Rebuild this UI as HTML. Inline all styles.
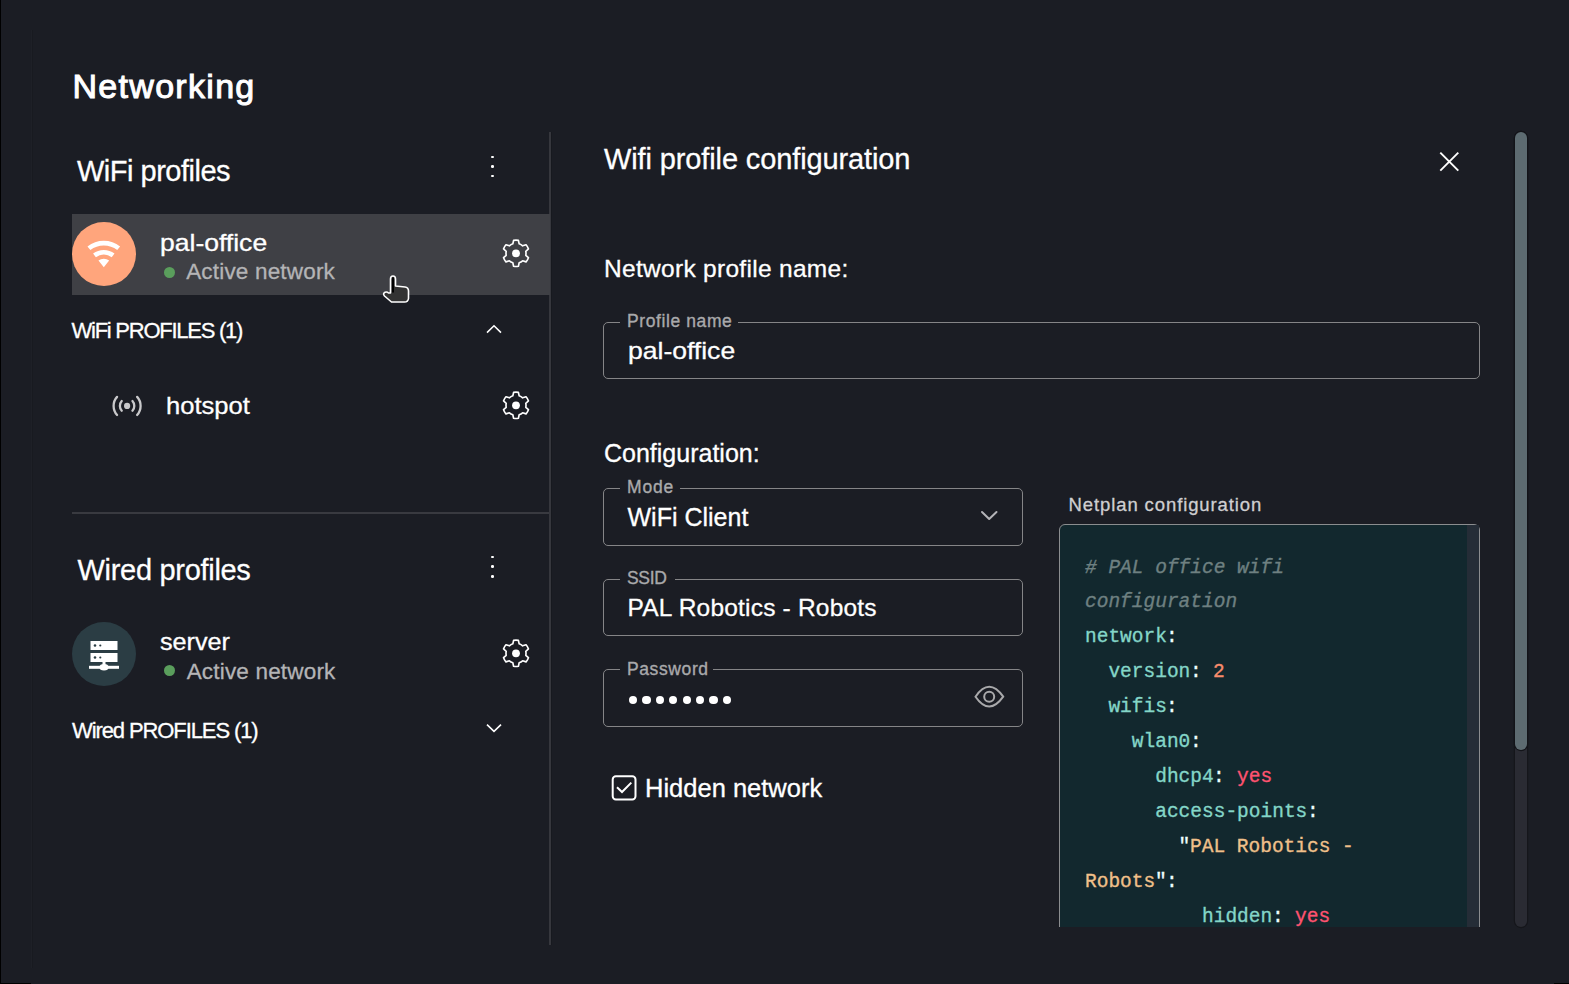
<!DOCTYPE html>
<html><head><meta charset="utf-8"><style>
html,body{margin:0;padding:0}
body{width:1569px;height:984px;overflow:hidden;position:relative;background:#1b1d24;font-family:'Liberation Sans', sans-serif}
.t{position:absolute;white-space:pre;line-height:1}
</style></head><body>
<div style="position:absolute;left:0px;top:0px;width:1px;height:984px;background:#000"></div>
<div style="position:absolute;left:31px;top:30px;width:1px;height:938px;background:#1e2027"></div>
<div style="position:absolute;left:32px;top:30px;width:1px;height:938px;background:#181a20"></div>
<div style="position:absolute;left:0px;top:983px;width:31px;height:1px;background:#000"></div>
<div style="position:absolute;left:1554px;top:983px;width:15px;height:1px;background:#000"></div>
<div class="t" style="left:72.5px;top:69.10px;font-size:34px;color:#fff;letter-spacing:1.3px;font-weight:normal;font-family:'Liberation Sans', sans-serif;-webkit-text-stroke:1.0px #fff;">Networking</div>
<div style="position:absolute;left:549px;top:132px;width:2px;height:813px;background:#36373d"></div>
<div style="position:absolute;left:551px;top:132px;width:1px;height:813px;background:#17191f"></div>
<div class="t" style="left:77px;top:156.75px;font-size:29px;color:#fff;letter-spacing:-0.5px;font-weight:normal;font-family:'Liberation Sans', sans-serif;-webkit-text-stroke:0.3px #fff;">WiFi profiles</div>
<div style="position:absolute;left:491.2px;top:155.5px;width:2.6px;height:2.6px;background:#fff;border-radius:50%"></div>
<div style="position:absolute;left:491.2px;top:165.0px;width:2.6px;height:2.6px;background:#fff;border-radius:50%"></div>
<div style="position:absolute;left:491.2px;top:174.6px;width:2.6px;height:2.6px;background:#fff;border-radius:50%"></div>
<div style="position:absolute;left:491.2px;top:555.5px;width:2.6px;height:2.6px;background:#fff;border-radius:50%"></div>
<div style="position:absolute;left:491.2px;top:565.3000000000001px;width:2.6px;height:2.6px;background:#fff;border-radius:50%"></div>
<div style="position:absolute;left:491.2px;top:575.1px;width:2.6px;height:2.6px;background:#fff;border-radius:50%"></div>
<div style="position:absolute;left:72px;top:213.5px;width:478px;height:81.5px;background:#3f4045"></div>
<div style="position:absolute;left:72px;top:222px;width:64px;height:64px;background:#ffa57c;border-radius:50%"></div>
<svg style="position:absolute;left:0;top:0" width="1569" height="984"><path d="M103.8,267.3 L98.45,260.57 A8.6,8.6 0 0 1 109.15,260.57 Z M93.09,253.59 A17.4,17.4 0 0 1 114.51,253.59 L111.68,257.21 A12.8,12.8 0 0 0 95.92,257.21 Z M87.48,246.42 A26.5,26.5 0 0 1 120.12,246.42 L117.22,250.12 A21.8,21.8 0 0 0 90.38,250.12 Z" fill="#fff"/></svg>
<div class="t" style="left:160px;top:230.70px;font-size:24px;color:#fff;letter-spacing:0px;font-weight:normal;font-family:'Liberation Sans', sans-serif;transform:scaleX(1.105);transform-origin:0 0;-webkit-text-stroke:0.3px #fff;">pal-office</div>
<div style="position:absolute;left:163.5px;top:266.5px;width:11px;height:11px;background:#5a9e5c;border-radius:50%"></div>
<div class="t" style="left:186.2px;top:260.77px;font-size:22.5px;color:#b4b4b6;letter-spacing:0.18px;font-weight:normal;font-family:'Liberation Sans', sans-serif;-webkit-text-stroke:0.3px #b4b4b6;">Active network</div>
<svg style="position:absolute;left:0;top:0" width="1569" height="984"><path d="M512.83,243.82 L513.59,240.32 A13.2,13.2 0 0 1 518.41,240.32 L519.17,243.82 A10.0,10.0 0 0 1 522.63,245.81 L526.04,244.73 A13.2,13.2 0 0 1 528.44,248.89 L525.80,251.31 A10.0,10.0 0 0 1 525.80,255.29 L528.44,257.71 A13.2,13.2 0 0 1 526.04,261.87 L522.63,260.79 A10.0,10.0 0 0 1 519.17,262.78 L518.41,266.28 A13.2,13.2 0 0 1 513.59,266.28 L512.83,262.78 A10.0,10.0 0 0 1 509.37,260.79 L505.96,261.87 A13.2,13.2 0 0 1 503.56,257.71 L506.20,255.29 A10.0,10.0 0 0 1 506.20,251.31 L503.56,248.89 A13.2,13.2 0 0 1 505.96,244.73 L509.37,245.81 A10.0,10.0 0 0 1 512.83,243.82 Z" fill="none" stroke="#fff" stroke-width="1.65" stroke-linejoin="round"/><circle cx="516" cy="253.3" r="3.9" fill="#fff"/><path d="M512.83,395.82 L513.59,392.32 A13.2,13.2 0 0 1 518.41,392.32 L519.17,395.82 A10.0,10.0 0 0 1 522.63,397.81 L526.04,396.73 A13.2,13.2 0 0 1 528.44,400.89 L525.80,403.31 A10.0,10.0 0 0 1 525.80,407.29 L528.44,409.71 A13.2,13.2 0 0 1 526.04,413.87 L522.63,412.79 A10.0,10.0 0 0 1 519.17,414.78 L518.41,418.28 A13.2,13.2 0 0 1 513.59,418.28 L512.83,414.78 A10.0,10.0 0 0 1 509.37,412.79 L505.96,413.87 A13.2,13.2 0 0 1 503.56,409.71 L506.20,407.29 A10.0,10.0 0 0 1 506.20,403.31 L503.56,400.89 A13.2,13.2 0 0 1 505.96,396.73 L509.37,397.81 A10.0,10.0 0 0 1 512.83,395.82 Z" fill="none" stroke="#fff" stroke-width="1.65" stroke-linejoin="round"/><circle cx="516" cy="405.3" r="3.9" fill="#fff"/><path d="M512.83,643.82 L513.59,640.32 A13.2,13.2 0 0 1 518.41,640.32 L519.17,643.82 A10.0,10.0 0 0 1 522.63,645.81 L526.04,644.73 A13.2,13.2 0 0 1 528.44,648.89 L525.80,651.31 A10.0,10.0 0 0 1 525.80,655.29 L528.44,657.71 A13.2,13.2 0 0 1 526.04,661.87 L522.63,660.79 A10.0,10.0 0 0 1 519.17,662.78 L518.41,666.28 A13.2,13.2 0 0 1 513.59,666.28 L512.83,662.78 A10.0,10.0 0 0 1 509.37,660.79 L505.96,661.87 A13.2,13.2 0 0 1 503.56,657.71 L506.20,655.29 A10.0,10.0 0 0 1 506.20,651.31 L503.56,648.89 A13.2,13.2 0 0 1 505.96,644.73 L509.37,645.81 A10.0,10.0 0 0 1 512.83,643.82 Z" fill="none" stroke="#fff" stroke-width="1.65" stroke-linejoin="round"/><circle cx="516" cy="653.3" r="3.9" fill="#fff"/></svg>
<div class="t" style="left:71.5px;top:320.10px;font-size:22px;color:#fff;letter-spacing:-1.25px;font-weight:normal;font-family:'Liberation Sans', sans-serif;-webkit-text-stroke:0.3px #fff;">WiFi PROFILES (1)</div>
<svg style="position:absolute;left:0;top:0" width="1569" height="984"><path d="M487,332.6 L494,325.8 L501,332.6" fill="none" stroke="#fff" stroke-width="1.6"/><path d="M487,724.6 L494,731.4 L501,724.6" fill="none" stroke="#fff" stroke-width="1.6"/></svg>
<svg style="position:absolute;left:0;top:0" width="1569" height="984" fill="none" stroke="#c9c9cb" stroke-width="2.3" stroke-linecap="round"><circle cx="127.1" cy="405.9" r="3.1" fill="#c9c9cb" stroke="none"/><path d="M121.75,401.08 A7.2,7.2 0 0 0 121.75,410.72"/><path d="M132.45,401.08 A7.2,7.2 0 0 1 132.45,410.72"/><path d="M117.07,396.87 A13.5,13.5 0 0 0 117.07,414.93"/><path d="M137.13,396.87 A13.5,13.5 0 0 1 137.13,414.93"/></svg>
<div class="t" style="left:165.5px;top:394.30px;font-size:24px;color:#fff;letter-spacing:0px;font-weight:normal;font-family:'Liberation Sans', sans-serif;transform:scaleX(1.065);transform-origin:0 0;-webkit-text-stroke:0.3px #fff;">hotspot</div>
<div style="position:absolute;left:72px;top:512.4px;width:477px;height:2px;background:#393a40"></div>
<div class="t" style="left:77.5px;top:556.35px;font-size:29px;color:#fff;letter-spacing:-0.3px;font-weight:normal;font-family:'Liberation Sans', sans-serif;-webkit-text-stroke:0.3px #fff;">Wired profiles</div>
<div style="position:absolute;left:72px;top:622px;width:64px;height:64px;background:#2b3d44;border-radius:50%"></div>
<svg style="position:absolute;left:0;top:0" width="1569" height="984"><rect x="90.5" y="641" width="27" height="9" fill="#fff"/><rect x="90.5" y="653" width="27" height="9" fill="#fff"/><circle cx="95" cy="645.5" r="1.3" fill="#2b3d44"/><circle cx="100.3" cy="645.5" r="1.1" fill="#2b3d44"/><circle cx="95" cy="657.5" r="1.3" fill="#2b3d44"/><circle cx="100.3" cy="657.5" r="1.1" fill="#2b3d44"/><rect x="102.5" y="662" width="3" height="4" fill="#fff"/><rect x="89" y="665.8" width="30" height="3" fill="#fff"/><ellipse cx="104" cy="667.3" rx="4.5" ry="3.2" fill="#fff"/></svg>
<div class="t" style="left:160.4px;top:630.30px;font-size:24px;color:#fff;letter-spacing:0px;font-weight:normal;font-family:'Liberation Sans', sans-serif;transform:scaleX(1.05);transform-origin:0 0;-webkit-text-stroke:0.3px #fff;">server</div>
<div style="position:absolute;left:163.5px;top:665px;width:11px;height:11px;background:#5a9e5c;border-radius:50%"></div>
<div class="t" style="left:186.7px;top:660.77px;font-size:22.5px;color:#b4b4b6;letter-spacing:0.18px;font-weight:normal;font-family:'Liberation Sans', sans-serif;-webkit-text-stroke:0.3px #b4b4b6;">Active network</div>
<div class="t" style="left:72px;top:719.60px;font-size:22px;color:#fff;letter-spacing:-1.1px;font-weight:normal;font-family:'Liberation Sans', sans-serif;-webkit-text-stroke:0.3px #fff;">Wired PROFILES (1)</div>
<svg style="position:absolute;left:0;top:0" width="1569" height="984"><path d="M390.5,293 L390.5,279 Q390.5,276 393,276 Q395.5,276 395.5,279 L395.5,286 L405,287 Q408.5,287.5 408.5,291 L408.5,298.5 Q408,302 404.5,302 L391.5,302 L384.5,296 Q382.5,293.5 385,292.3 Q387,291.5 388.5,293 Z" fill="#333" stroke="#fff" stroke-width="1.6" stroke-linejoin="round"/><rect x="392" y="277.5" width="2" height="15" fill="#000"/></svg>
<div class="t" style="left:604px;top:144.95px;font-size:29px;color:#fff;letter-spacing:-0.12px;font-weight:normal;font-family:'Liberation Sans', sans-serif;-webkit-text-stroke:0.3px #fff;">Wifi profile configuration</div>
<svg style="position:absolute;left:0;top:0" width="1569" height="984"><path d="M1440.3,152.6 L1458.3,170.6 M1458.3,152.6 L1440.3,170.6" stroke="#fff" stroke-width="1.9"/></svg>
<div class="t" style="left:604px;top:256.78px;font-size:24.5px;color:#fff;letter-spacing:0.3px;font-weight:normal;font-family:'Liberation Sans', sans-serif;-webkit-text-stroke:0.3px #fff;">Network profile name:</div>
<div style="position:absolute;left:603.3px;top:321.6px;width:877px;height:57.5px;box-sizing:border-box;border:1.5px solid #858587;border-radius:5px"></div>
<div style="position:absolute;left:619.8px;top:318.6px;width:118px;height:6px;background:#1b1d24"></div>
<div class="t" style="left:627px;top:312.73px;font-size:17.5px;color:#a9a9ab;letter-spacing:0.6px;font-weight:normal;font-family:'Liberation Sans', sans-serif;-webkit-text-stroke:0.35px #a9a9ab;">Profile name</div>
<div class="t" style="left:627.5px;top:338.60px;font-size:24px;color:#fff;letter-spacing:0px;font-weight:normal;font-family:'Liberation Sans', sans-serif;transform:scaleX(1.105);transform-origin:0 0;-webkit-text-stroke:0.3px #fff;">pal-office</div>
<div class="t" style="left:604px;top:441.25px;font-size:25px;color:#fff;letter-spacing:0px;font-weight:normal;font-family:'Liberation Sans', sans-serif;-webkit-text-stroke:0.3px #fff;">Configuration:</div>
<div style="position:absolute;left:603.3px;top:488px;width:420px;height:57.5px;box-sizing:border-box;border:1.5px solid #858587;border-radius:5px"></div>
<div style="position:absolute;left:619.8px;top:485px;width:60px;height:6px;background:#1b1d24"></div>
<div class="t" style="left:627px;top:479.43px;font-size:17.5px;color:#a9a9ab;letter-spacing:0.8px;font-weight:normal;font-family:'Liberation Sans', sans-serif;-webkit-text-stroke:0.35px #a9a9ab;">Mode</div>
<div class="t" style="left:627.5px;top:504.95px;font-size:25px;color:#fff;letter-spacing:0px;font-weight:normal;font-family:'Liberation Sans', sans-serif;-webkit-text-stroke:0.3px #fff;">WiFi Client</div>
<svg style="position:absolute;left:0;top:0" width="1569" height="984"><path d="M982,512 L989.2,519 L996.5,512" fill="none" stroke="#b4b4b8" stroke-width="2" stroke-linecap="round" stroke-linejoin="round"/></svg>
<div style="position:absolute;left:603.3px;top:578.8px;width:420px;height:57.5px;box-sizing:border-box;border:1.5px solid #858587;border-radius:5px"></div>
<div style="position:absolute;left:619.8px;top:575.8px;width:55px;height:6px;background:#1b1d24"></div>
<div class="t" style="left:627px;top:570.33px;font-size:17.5px;color:#a9a9ab;letter-spacing:-0.3px;font-weight:normal;font-family:'Liberation Sans', sans-serif;-webkit-text-stroke:0.35px #a9a9ab;">SSID</div>
<div class="t" style="left:627.5px;top:595.67px;font-size:24.5px;color:#fff;letter-spacing:0.2px;font-weight:normal;font-family:'Liberation Sans', sans-serif;-webkit-text-stroke:0.3px #fff;">PAL Robotics - Robots</div>
<div style="position:absolute;left:603.3px;top:669px;width:420px;height:57.5px;box-sizing:border-box;border:1.5px solid #858587;border-radius:5px"></div>
<div style="position:absolute;left:619.8px;top:666px;width:93px;height:6px;background:#1b1d24"></div>
<div class="t" style="left:627px;top:661.33px;font-size:17.5px;color:#a9a9ab;letter-spacing:0.6px;font-weight:normal;font-family:'Liberation Sans', sans-serif;-webkit-text-stroke:0.35px #a9a9ab;">Password</div>
<div style="position:absolute;left:629.0px;top:696px;width:8.2px;height:8.2px;background:#fff;border-radius:50%"></div>
<div style="position:absolute;left:642.4px;top:696px;width:8.2px;height:8.2px;background:#fff;border-radius:50%"></div>
<div style="position:absolute;left:655.8px;top:696px;width:8.2px;height:8.2px;background:#fff;border-radius:50%"></div>
<div style="position:absolute;left:669.2px;top:696px;width:8.2px;height:8.2px;background:#fff;border-radius:50%"></div>
<div style="position:absolute;left:682.6px;top:696px;width:8.2px;height:8.2px;background:#fff;border-radius:50%"></div>
<div style="position:absolute;left:696.0px;top:696px;width:8.2px;height:8.2px;background:#fff;border-radius:50%"></div>
<div style="position:absolute;left:709.4px;top:696px;width:8.2px;height:8.2px;background:#fff;border-radius:50%"></div>
<div style="position:absolute;left:722.8px;top:696px;width:8.2px;height:8.2px;background:#fff;border-radius:50%"></div>
<svg style="position:absolute;left:0;top:0" width="1569" height="984" fill="none" stroke="#a9a9ab" stroke-width="2"><path d="M975.5,696.7 Q989.2,677 1003.2,696.7 Q989.2,716.4 975.5,696.7 Z"/><circle cx="989.2" cy="696.7" r="5"/></svg>
<svg style="position:absolute;left:0;top:0" width="1569" height="984" fill="none" stroke="#fff" stroke-width="2"><rect x="612.7" y="776.3" width="22.8" height="23.2" rx="3.2"/><path d="M617,787.3 L622,792 L631.3,782.6"/></svg>
<div class="t" style="left:645px;top:775.73px;font-size:25.5px;color:#fff;letter-spacing:0px;font-weight:normal;font-family:'Liberation Sans', sans-serif;-webkit-text-stroke:0.3px #fff;">Hidden network</div>
<div class="t" style="left:1068.5px;top:496.07px;font-size:18.5px;color:#cfcfd1;letter-spacing:0.9px;font-weight:normal;font-family:'Liberation Sans', sans-serif;-webkit-text-stroke:0.3px #cfcfd1;">Netplan configuration</div>
<div style="position:absolute;left:0;top:0;width:1569px;height:927px;overflow:hidden">
<div style="position:absolute;left:1058.5px;top:523.5px;width:421.5px;height:500px;box-sizing:border-box;border:1.6px solid #8b8d8f;border-radius:6px;background:#12282e"></div>
<div style="position:absolute;left:1467px;top:525px;width:11.5px;height:402px;background:#252d37"></div>
<div class="t" style="left:1084.5px;top:557.69px;font-size:20.5px;color:#6e8081;letter-spacing:0px;font-weight:normal;font-family:'Liberation Mono', monospace;font-style:italic;transform:scaleX(0.951);transform-origin:0 0;-webkit-text-stroke:0.35px #6e8081;"># PAL office wifi</div>
<div class="t" style="left:1084.5px;top:592.49px;font-size:20.5px;color:#6e8081;letter-spacing:0px;font-weight:normal;font-family:'Liberation Mono', monospace;font-style:italic;transform:scaleX(0.951);transform-origin:0 0;-webkit-text-stroke:0.35px #6e8081;">configuration</div>
<div class="t" style="left:1084.5px;top:627.49px;font-size:20.5px;color:#84d6c8;letter-spacing:0px;font-weight:normal;font-family:'Liberation Mono', monospace;transform:scaleX(0.951);transform-origin:0 0;-webkit-text-stroke:0.35px #84d6c8;">network</div>
<div class="t" style="left:1166.4px;top:627.49px;font-size:20.5px;color:#eeffff;letter-spacing:0px;font-weight:normal;font-family:'Liberation Mono', monospace;transform:scaleX(0.951);transform-origin:0 0;-webkit-text-stroke:0.35px #eeffff;">:</div>
<div class="t" style="left:1084.5px;top:662.49px;font-size:20.5px;color:#84d6c8;letter-spacing:0px;font-weight:normal;font-family:'Liberation Mono', monospace;transform:scaleX(0.951);transform-origin:0 0;-webkit-text-stroke:0.35px #84d6c8;">  version</div>
<div class="t" style="left:1189.8px;top:662.49px;font-size:20.5px;color:#eeffff;letter-spacing:0px;font-weight:normal;font-family:'Liberation Mono', monospace;transform:scaleX(0.951);transform-origin:0 0;-webkit-text-stroke:0.35px #eeffff;">: </div>
<div class="t" style="left:1213.2px;top:662.49px;font-size:20.5px;color:#f78c6c;letter-spacing:0px;font-weight:normal;font-family:'Liberation Mono', monospace;transform:scaleX(0.951);transform-origin:0 0;-webkit-text-stroke:0.35px #f78c6c;">2</div>
<div class="t" style="left:1084.5px;top:697.49px;font-size:20.5px;color:#84d6c8;letter-spacing:0px;font-weight:normal;font-family:'Liberation Mono', monospace;transform:scaleX(0.951);transform-origin:0 0;-webkit-text-stroke:0.35px #84d6c8;">  wifis</div>
<div class="t" style="left:1166.4px;top:697.49px;font-size:20.5px;color:#eeffff;letter-spacing:0px;font-weight:normal;font-family:'Liberation Mono', monospace;transform:scaleX(0.951);transform-origin:0 0;-webkit-text-stroke:0.35px #eeffff;">:</div>
<div class="t" style="left:1084.5px;top:732.49px;font-size:20.5px;color:#84d6c8;letter-spacing:0px;font-weight:normal;font-family:'Liberation Mono', monospace;transform:scaleX(0.951);transform-origin:0 0;-webkit-text-stroke:0.35px #84d6c8;">    wlan0</div>
<div class="t" style="left:1189.8px;top:732.49px;font-size:20.5px;color:#eeffff;letter-spacing:0px;font-weight:normal;font-family:'Liberation Mono', monospace;transform:scaleX(0.951);transform-origin:0 0;-webkit-text-stroke:0.35px #eeffff;">:</div>
<div class="t" style="left:1084.5px;top:767.49px;font-size:20.5px;color:#84d6c8;letter-spacing:0px;font-weight:normal;font-family:'Liberation Mono', monospace;transform:scaleX(0.951);transform-origin:0 0;-webkit-text-stroke:0.35px #84d6c8;">      dhcp4</div>
<div class="t" style="left:1213.2px;top:767.49px;font-size:20.5px;color:#eeffff;letter-spacing:0px;font-weight:normal;font-family:'Liberation Mono', monospace;transform:scaleX(0.951);transform-origin:0 0;-webkit-text-stroke:0.35px #eeffff;">: </div>
<div class="t" style="left:1236.6px;top:767.49px;font-size:20.5px;color:#ff5370;letter-spacing:0px;font-weight:normal;font-family:'Liberation Mono', monospace;transform:scaleX(0.951);transform-origin:0 0;-webkit-text-stroke:0.35px #ff5370;">yes</div>
<div class="t" style="left:1084.5px;top:802.49px;font-size:20.5px;color:#84d6c8;letter-spacing:0px;font-weight:normal;font-family:'Liberation Mono', monospace;transform:scaleX(0.951);transform-origin:0 0;-webkit-text-stroke:0.35px #84d6c8;">      access-points</div>
<div class="t" style="left:1306.8px;top:802.49px;font-size:20.5px;color:#eeffff;letter-spacing:0px;font-weight:normal;font-family:'Liberation Mono', monospace;transform:scaleX(0.951);transform-origin:0 0;-webkit-text-stroke:0.35px #eeffff;">:</div>
<div class="t" style="left:1084.5px;top:837.49px;font-size:20.5px;color:#eeffff;letter-spacing:0px;font-weight:normal;font-family:'Liberation Mono', monospace;transform:scaleX(0.951);transform-origin:0 0;-webkit-text-stroke:0.35px #eeffff;">        &quot;</div>
<div class="t" style="left:1189.8px;top:837.49px;font-size:20.5px;color:#f0c08a;letter-spacing:0px;font-weight:normal;font-family:'Liberation Mono', monospace;transform:scaleX(0.951);transform-origin:0 0;-webkit-text-stroke:0.35px #f0c08a;">PAL Robotics -</div>
<div class="t" style="left:1084.5px;top:872.49px;font-size:20.5px;color:#f0c08a;letter-spacing:0px;font-weight:normal;font-family:'Liberation Mono', monospace;transform:scaleX(0.951);transform-origin:0 0;-webkit-text-stroke:0.35px #f0c08a;">Robots</div>
<div class="t" style="left:1154.7px;top:872.49px;font-size:20.5px;color:#eeffff;letter-spacing:0px;font-weight:normal;font-family:'Liberation Mono', monospace;transform:scaleX(0.951);transform-origin:0 0;-webkit-text-stroke:0.35px #eeffff;">&quot;</div>
<div class="t" style="left:1166.4px;top:872.49px;font-size:20.5px;color:#eeffff;letter-spacing:0px;font-weight:normal;font-family:'Liberation Mono', monospace;transform:scaleX(0.951);transform-origin:0 0;-webkit-text-stroke:0.35px #eeffff;">:</div>
<div class="t" style="left:1084.5px;top:907.49px;font-size:20.5px;color:#84d6c8;letter-spacing:0px;font-weight:normal;font-family:'Liberation Mono', monospace;transform:scaleX(0.951);transform-origin:0 0;-webkit-text-stroke:0.35px #84d6c8;">          hidden</div>
<div class="t" style="left:1271.7px;top:907.49px;font-size:20.5px;color:#eeffff;letter-spacing:0px;font-weight:normal;font-family:'Liberation Mono', monospace;transform:scaleX(0.951);transform-origin:0 0;-webkit-text-stroke:0.35px #eeffff;">: </div>
<div class="t" style="left:1295.1px;top:907.49px;font-size:20.5px;color:#ff5370;letter-spacing:0px;font-weight:normal;font-family:'Liberation Mono', monospace;transform:scaleX(0.951);transform-origin:0 0;-webkit-text-stroke:0.35px #ff5370;">yes</div>
</div>
<div style="position:absolute;left:1515.2px;top:132px;width:12px;height:795px;background:#2a2b33;border-radius:6px;box-shadow:0 0 0 1.2px #15161b"></div>
<div style="position:absolute;left:1515.2px;top:131.6px;width:12px;height:618.4px;background:#5d6b71;border-radius:6px;box-shadow:0 0 0 1.2px #131419"></div>
</body></html>
